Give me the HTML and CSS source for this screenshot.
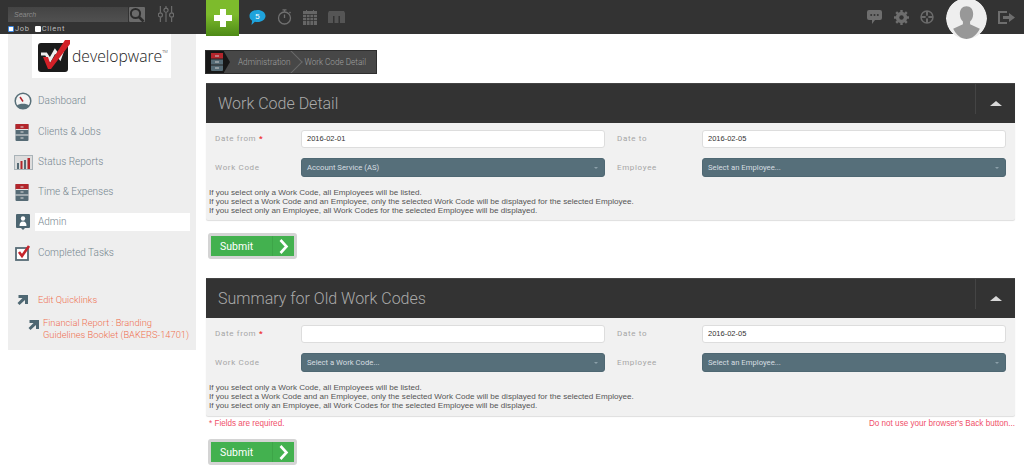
FILE: index.html
```html
<!DOCTYPE html>
<html lang="en">
<head>
<meta charset="utf-8">
<title>Work Code Detail</title>
<link rel="stylesheet" href="styles.css">
</head>
<body>
<header class="topbar">
  <div class="search-area">
    <div class="search-row">
      <div class="search-input">Search</div>
      <div class="search-btn">
        <svg width="16" height="16" viewBox="0 0 16 16"><circle cx="6.500" cy="6.500" r="4.600" fill="none" stroke="#2c2c2c" stroke-width="2"/><path d="M10 10l4.500 4.500" stroke="#2c2c2c" stroke-width="2.600"/></svg>
      </div>
      <svg class="sliders" width="16" height="16" viewBox="0 0 17 17"><g stroke="#6f6f6f" stroke-width="1.200" fill="none"><path d="M2.500 0v7M2.500 12v5M8.500 0v2M8.500 7v10M14.500 0v7M14.500 12v5"/><circle cx="2.500" cy="9.500" r="2.200"/><circle cx="8.500" cy="4.500" r="2.200"/><circle cx="14.500" cy="9.500" r="2.200"/></g></svg>
    </div>
    <div class="scope-row">
      <span class="scope"><i class="box box-on"></i>Job</span>
      <span class="scope"><i class="box"></i>Client</span>
    </div>
  </div>
  <div class="add-btn">
    <svg width="18" height="18" viewBox="0 0 18 18"><path d="M6 0h6v6h6v6h-6v6H6v-6H0V6h6z" fill="#fff"/></svg>
  </div>
  <div class="tools">
    <svg width="17" height="17" viewBox="0 0 17 17"><path d="M8.500 1C13 1 16.500 3.600 16.500 7S13 13 8.500 13c-1 0-1.800-.1-2.600-.3L2.500 16l.6-4.300C1.400 10.600.500 9 .500 7 .500 3.600 4 1 8.500 1z" fill="#1fa3dc"/><text x="8.500" y="10" class="badge-num">5</text></svg>
    <svg width="15" height="16" viewBox="0 0 15 16"><g fill="none" stroke="#707070" stroke-width="1.300"><circle cx="7.500" cy="9" r="6"/><path d="M7.500 5.500V9M5.500.800h4M7.500.800v2M12.500 3l1 1"/></g></svg>
    <svg width="14" height="15" viewBox="0 0 14 15"><rect y="1" width="14" height="14" fill="#666"/><path d="M3.500 0v3M10.500 0v3" stroke="#666"/><path d="M0 4.500h14M0 7.500h14M0 10.500h14M3.500 4.500V15M7 4.500V15M10.500 4.500V15" stroke="#333" stroke-width=".8"/></svg>
    <svg width="17" height="12" viewBox="0 0 17 12"><path d="M1 0h15l1 2v10H12V5H10.500v7H6.500V5H5v7H0V2z" fill="#555"/></svg>
  </div>
  <div class="account">
    <svg width="15" height="14" viewBox="0 0 15 14"><path d="M2 0h11a2 2 0 0 1 2 2v6a2 2 0 0 1-2 2H8l-3 4v-4H2a2 2 0 0 1-2-2V2a2 2 0 0 1 2-2z" fill="#6e6e6e"/><g fill="#333"><circle cx="4.200" cy="5" r="1"/><circle cx="7.500" cy="5" r="1"/><circle cx="10.800" cy="5" r="1"/></g></svg>
    <svg width="15" height="15" viewBox="0 0 15 15"><circle cx="7.500" cy="7.500" r="4.200" fill="none" stroke="#6e6e6e" stroke-width="3"/><path d="M7.500 0v15M0 7.500h15M2.200 2.200l10.600 10.600M12.800 2.200L2.200 12.800" stroke="#6e6e6e" stroke-width="2.400"/><circle cx="7.500" cy="7.500" r="2.200" fill="#333"/></svg>
    <svg width="14" height="14" viewBox="0 0 14 14"><circle cx="7" cy="7" r="6" fill="none" stroke="#6a6a6a" stroke-width="1.500"/><path d="M7 1v12M1 7h12" stroke="#6a6a6a" stroke-width="2"/><circle cx="7" cy="7" r="1.500" fill="#333"/></svg>
    <div class="avatar">
      <svg width="41" height="41" viewBox="0 0 40 40"><circle cx="20" cy="20" r="20" fill="#eee"/><path d="M20 8c4 0 6.500 3 6.500 7.500 0 3-1 5.500-3 7.500v2.500L33 30c-3 6-8 10-13 10S10 36 7 30l9.500-4.500V23c-2-2-3-4.500-3-7.500C13.500 11 16 8 20 8z" fill="#989898"/></svg>
    </div>
    <svg width="17" height="13" viewBox="0 0 17 13"><path d="M9 0H0v13h9v-2H2V2h7z" fill="#6e6e6e"/><path d="M5 5h6V2l6 4.500L11 11V8H5z" fill="#6e6e6e"/></svg>
  </div>
</header>

<div class="layout">
  <aside class="sidebar">
    <div class="logo">
      <svg width="32" height="32" viewBox="0 0 32 32"><rect y="3" width="30" height="29" rx="3" fill="#1b1b1b"/><path d="M3 14l5 0 4 6 5-9 5 7 4-11" fill="none" stroke="#eee" stroke-width="3"/><path d="M5 17l5 0 2 6L27 0h8L13 29h-3z" fill="#d32027"/></svg>
      <span class="logo-word">developware<sup class="tm">TM</sup></span>
    </div>
    <nav class="nav">
      <a class="nav-item nav-dash">
        <svg class="nav-icon" width="18" height="18" viewBox="0 0 18 18"><circle cx="9" cy="9" r="7.800" fill="#f4f4f4" stroke="#587079" stroke-width="1.500"/><path d="M3 13.500C5 11 13 11 15 13.500L13 16H5z" fill="#587079"/><path d="M9 9.500L6 5" stroke="#b3262c" stroke-width="1.500"/></svg>
        <span>Dashboard</span>
      </a>
      <a class="nav-item nav-clients">
        <svg class="nav-icon" width="18" height="17" viewBox="0 0 18 17"><rect x="1.500" y="0" width="13" height="17" rx="1" fill="#566b75"/><rect x="1.500" y="0" width="13" height="6" fill="#b3262c"/><path d="M1.500 5.500h13M1.500 11h13" stroke="#e6e6e6"/><path d="M6.500 3h3M6.500 8h3M6.500 14h3" stroke="#ddd"/></svg>
        <span>Clients &amp; Jobs</span>
      </a>
      <a class="nav-item nav-status">
        <svg class="nav-icon nav-icon-wide" width="19" height="15" viewBox="0 0 19 15"><rect width="19" height="15" fill="#a9b3b8"/><rect x="1" y="1" width="17" height="13" fill="#ddd"/><path d="M3 8h2v6H3zM10 5h2v9h-2z" fill="#566b75"/><path d="M6.500 6h2v8h-2zM13.500 3h2.500v11h-2.500z" fill="#b3262c"/></svg>
        <span>Status Reports</span>
      </a>
      <a class="nav-item nav-time">
        <svg class="nav-icon" width="18" height="17" viewBox="0 0 18 17"><rect x="1.500" y="0" width="13" height="17" rx="1" fill="#566b75"/><rect x="1.500" y="0" width="13" height="6" fill="#b3262c"/><path d="M1.500 5.500h13M1.500 11h13" stroke="#e6e6e6"/><path d="M6.500 3h3M6.500 8h3M6.500 14h3" stroke="#ddd"/></svg>
        <span>Time &amp; Expenses</span>
      </a>
      <a class="nav-item nav-admin">
        <svg class="nav-icon" width="18" height="16" viewBox="0 0 18 16"><path d="M3 0h12a1 1 0 0 1 1 1v12a1 1 0 0 1-1 1h-4l-2 2-2-2H3a1 1 0 0 1-1-1V1a1 1 0 0 1 1-1z" fill="#4c6570"/><circle cx="9" cy="4.500" r="2.200" fill="#fff"/><path d="M5.500 12c0-3 1-4.500 3.500-4.500s3.500 1.500 3.500 4.500z" fill="#fff"/></svg>
        <span class="nav-label-active">Admin</span>
      </a>
      <a class="nav-item nav-done">
        <svg class="nav-icon" width="18" height="16" viewBox="0 0 18 16"><rect x="2" y="3" width="12" height="12" fill="#fff" stroke="#566b75" stroke-width="1.800"/><path d="M5 7l3 4 7-10" fill="none" stroke="#c5252c" stroke-width="2.600"/></svg>
        <span>Completed Tasks</span>
      </a>
    </nav>
    <div class="quick">
      <a class="quick-edit">
        <svg class="arrow" width="11" height="10" viewBox="0 0 11 10"><path d="M1.500 0H11v9H8V5L2.500 10 .500 8 5.500 3H1.500z" fill="#4f6873"/></svg>
        <span>Edit Quicklinks</span>
      </a>
      <a class="quick-link">
        <svg class="arrow" width="11" height="10" viewBox="0 0 11 10"><path d="M1.500 0H11v9H8V5L2.500 10 .500 8 5.500 3H1.500z" fill="#4f6873"/></svg>
        <span>Financial Report : Branding Guidelines Booklet (BAKERS-14701)</span>
      </a>
    </div>
  </aside>

  <main class="main">
    <div class="crumbs">
      <div class="crumb-home">
        <svg width="12" height="18" viewBox="0 0 12 18"><rect width="12" height="18" rx="1" fill="#566b75"/><rect width="12" height="6" fill="#b3262c"/><path d="M0 6h12M0 12h12" stroke="#222"/><path d="M4 3h4M4 9h4M4 15h4" stroke="#ccc"/></svg>
      </div>
      <span class="crumb crumb-first">Administration</span>
      <span class="crumb">Work Code Detail</span>
    </div>

    <section class="panel">
      <div class="panel-head"><h2>Work Code Detail</h2><div class="collapse"><i class="caret"></i></div></div>
      <div class="panel-body">
        <div class="form-grid">
          <label>Date from <b>*</b></label><div class="input">2016-02-01</div>
          <label class="label-right">Date to</label><div class="input">2016-02-05</div>
          <label>Work Code</label><div class="select">Account Service (AS)<i class="mini"></i></div>
          <label class="label-right">Employee</label><div class="select">Select an Employee...<i class="mini"></i></div>
        </div>
        <p class="note">If you select only a Work Code, all Employees will be listed.<br>If you select a Work Code and an Employee, only the selected Work Code will be displayed for the selected Employee.<br>If you select only an Employee, all Work Codes for the selected Employee will be displayed.</p>
      </div>
    </section>
    <button class="submit"><span>Submit</span><i class="submit-go"><svg width="10" height="15" viewBox="0 0 10 15"><path d="M1.500 1l6 6.500-6 6.500" fill="none" stroke="#fff" stroke-width="2.600"/></svg></i></button>

    <section class="panel panel-second">
      <div class="panel-head"><h2>Summary for Old Work Codes</h2><div class="collapse"><i class="caret"></i></div></div>
      <div class="panel-body">
        <div class="form-grid">
          <label>Date from <b>*</b></label><div class="input"></div>
          <label class="label-right">Date to</label><div class="input">2016-02-05</div>
          <label>Work Code</label><div class="select">Select a Work Code...<i class="mini"></i></div>
          <label class="label-right">Employee</label><div class="select">Select an Employee...<i class="mini"></i></div>
        </div>
        <p class="note">If you select only a Work Code, all Employees will be listed.<br>If you select a Work Code and an Employee, only the selected Work Code will be displayed for the selected Employee.<br>If you select only an Employee, all Work Codes for the selected Employee will be displayed.</p>
      </div>
    </section>
    <div class="foot-notes"><span>* Fields are required.</span><span>Do not use your browser's Back button...</span></div>
    <button class="submit submit-last"><span>Submit</span><i class="submit-go"><svg width="10" height="15" viewBox="0 0 10 15"><path d="M1.500 1l6 6.500-6 6.500" fill="none" stroke="#fff" stroke-width="2.600"/></svg></i></button>
  </main>
</div>
</body>
</html>
```

FILE: styles.css
```css
* { box-sizing: border-box; }
html, body { margin: 0; padding: 0; height: 473px; overflow: hidden; background: #fff; }
body { font-family: Roboto, "Liberation Sans", sans-serif; font-weight: 300; color: #666; }
a { display: block; }
svg { display: block; flex: none; }
i { font-style: normal; display: block; }

.topbar { height: 34px; background: #333; display: flex; position: relative; }
.search-area { width: 206px; padding: 7px 0 0 8px; }
.search-row { display: flex; align-items: flex-start; height: 15px; }
.search-input { width: 120px; height: 15px; background: linear-gradient(#444, #505050); color: #8a8a8a; font: italic 7px/15px "Liberation Sans", sans-serif; padding-left: 6px; }
.search-btn { width: 16px; height: 15px; background: #6b6b6b; margin-left: 1px; border-radius: 1px; overflow: hidden; }
.sliders { margin: -1px 0 0 13px; }
.scope-row { display: flex; gap: 5px; margin-top: 2px; font: 400 7.500px/9px Roboto, sans-serif; color: #bbb; letter-spacing: .7px; }
.scope { display: flex; align-items: center; }
.box { width: 6px; height: 6px; background: #fff; border-radius: 1px; margin-right: 1px; }
.box-on { background: #fff; border: 1.500px solid #3a86e0; }
.add-btn { width: 33px; height: 36px; background: linear-gradient(#7dbb2c 40%, #4d8a16); display: flex; align-items: center; justify-content: center; position: relative; z-index: 2; padding-bottom: 1px; }
.tools { display: flex; align-items: center; gap: 11px; padding-left: 10px; height: 34px; }
.badge-num { fill: #fff; font: 8px "Liberation Sans", sans-serif; text-anchor: middle; }
.account { margin-left: auto; display: flex; align-items: center; height: 34px; padding-right: 9px; }
.account > svg:nth-child(1) { margin-right: 12px; }
.account > svg:nth-child(2) { margin-right: 11px; }
.account > svg:nth-child(3) { margin-right: 12px; }
.avatar { width: 41px; height: 41px; align-self: flex-start; margin-top: -2px; margin-right: 11px; border-radius: 50%; overflow: hidden; position: relative; z-index: 2; flex: none; }

.layout { display: flex; align-items: flex-start; }
.sidebar { width: 188px; height: 316px; margin-left: 8px; background: #eee; }
.logo { width: 139px; height: 44px; margin-left: 24px; background: #fff; display: flex; align-items: center; padding: 0 0 0 6px; gap: 2px; }
.logo-word { font: 300 15.700px/1 "Open Sans", sans-serif; color: #222; margin-top: 1px; }
.tm { font-size: 4px; vertical-align: 9px; line-height: 0; }
.nav-item { display: flex; align-items: center; height: 24px; position: relative; font-size: 10px; color: #75868e; line-height: 18px; padding-left: 6px; }
.nav-icon { width: 18px; margin-right: 6px; }
.nav-icon-wide { width: 19px; margin-right: 5px; }
.nav-dash { margin-top: 11px; }
.nav-clients { margin-top: 7px; }
.nav-status { margin-top: 6px; }
.nav-time { margin-top: 6px; }
.nav-admin { margin-top: 6px; }
.nav-done { margin-top: 7px; }
.nav-label-active { background: #fff; width: 155px; height: 18px; margin-left: -3px; padding-left: 3px; }
.quick { margin-top: 29px; color: #ee7050; font-size: 9.300px; line-height: 12px; }
.quick-edit { display: flex; align-items: center; gap: 10px; padding-left: 9px; }
.quick-link { display: flex; align-items: flex-start; gap: 4px; margin-top: 11px; padding-left: 20px; width: 186px; }
.quick-link .arrow { margin-top: 3px; }

.main { width: 809px; margin-left: 10px; padding-top: 16px; }
.crumbs { height: 24px; width: 172px; margin-left: -1px; background: #474747; border: 1px solid #2e2e2e; display: flex; align-items: center; font-size: 8.200px; color: #a0a0a0; overflow: hidden; }
.crumb-home { width: 18px; height: 24px; background: #171717; display: flex; align-items: center; padding-left: 5px; position: relative; z-index: 1; }
.crumb-home::after { content: ""; position: absolute; left: 17px; top: 0; border-left: 7px solid #171717; border-top: 12px solid transparent; border-bottom: 12px solid transparent; }
.crumb { position: relative; padding-left: 13px; }
.crumb-first { padding-left: 14px; padding-right: 1px; }
.crumb-first::after { content: ""; position: absolute; right: -8px; top: 50%; margin-top: -9px; width: 17px; height: 17px; border-top: 1px solid #6a6a6a; border-right: 1px solid #6a6a6a; transform: rotate(45deg); }

.panel { margin-top: 9px; background: #f1f1f1; height: 137px; border-radius: 0 0 2px 2px; box-shadow: 0 1px 1px #dedede; }
.panel-second { margin-top: 19px; height: 138px; }
.panel-head { height: 40px; background: #333; display: flex; justify-content: space-between; border-top: 1px solid #444; }
.panel-head h2 { margin: 0; font-weight: 300; font-size: 16px; line-height: 39px; color: #aaa; padding-left: 12px; }
.collapse { width: 40px; height: 30px; border-left: 1px solid #444; display: flex; justify-content: center; align-items: center; padding-top: 8px; }
.caret { border-left: 6px solid transparent; border-right: 6px solid transparent; border-bottom: 5px solid #d8d8d8; }
.panel-body { padding: 6px 10px 0 3px; }
.form-grid { display: grid; grid-template-columns: 92px 304px 97px 304px; grid-template-rows: 19px 19px; row-gap: 10px; align-items: center; }
.form-grid label { font: 400 8px/12px Roboto, sans-serif; color: #a5a5a5; letter-spacing: .65px; padding-left: 6px; }
.form-grid label b { color: #e33; font-weight: 700; }
.label-right { padding-left: 12px !important; }
.input { height: 18px; background: #fff; border: 1px solid #ddd; border-radius: 3px; font: 400 7.500px/16px "Liberation Sans", sans-serif; color: #333; padding-left: 5px; }
.select { height: 19px; background: #566f7a; border: 1px solid #4f6873; border-radius: 3px; color: #d6dee1; font: 400 7.700px/17px Roboto, sans-serif; padding-left: 5px; position: relative; }
.mini { position: absolute; right: 6px; top: 8px; border-left: 2px solid transparent; border-right: 2px solid transparent; border-top: 2px solid #8ba0a9; }
.note { margin: 11px 0 0; font: 400 8.100px/9px "Liberation Sans", sans-serif; color: #555; }

.submit { display: flex; align-items: center; width: 89px; height: 26px; margin: 13px 0 0 2px; padding: 0; background: #43b14f; border: 3px solid #d4d4d4; border-radius: 3px; font: 400 10.500px Roboto, sans-serif; color: #fff; }
.submit span { width: 61px; text-align: left; padding-left: 9px; }
.submit-go { flex: 1; height: 20px; border-left: 1px solid #3da548; display: flex; align-items: center; justify-content: center; }
.submit-last { margin-top: 9px; }
.foot-notes { display: flex; justify-content: space-between; margin-top: 2px; font: 400 8.150px/12px "Liberation Sans", sans-serif; color: #f0506a; padding-left: 3px; }
```
